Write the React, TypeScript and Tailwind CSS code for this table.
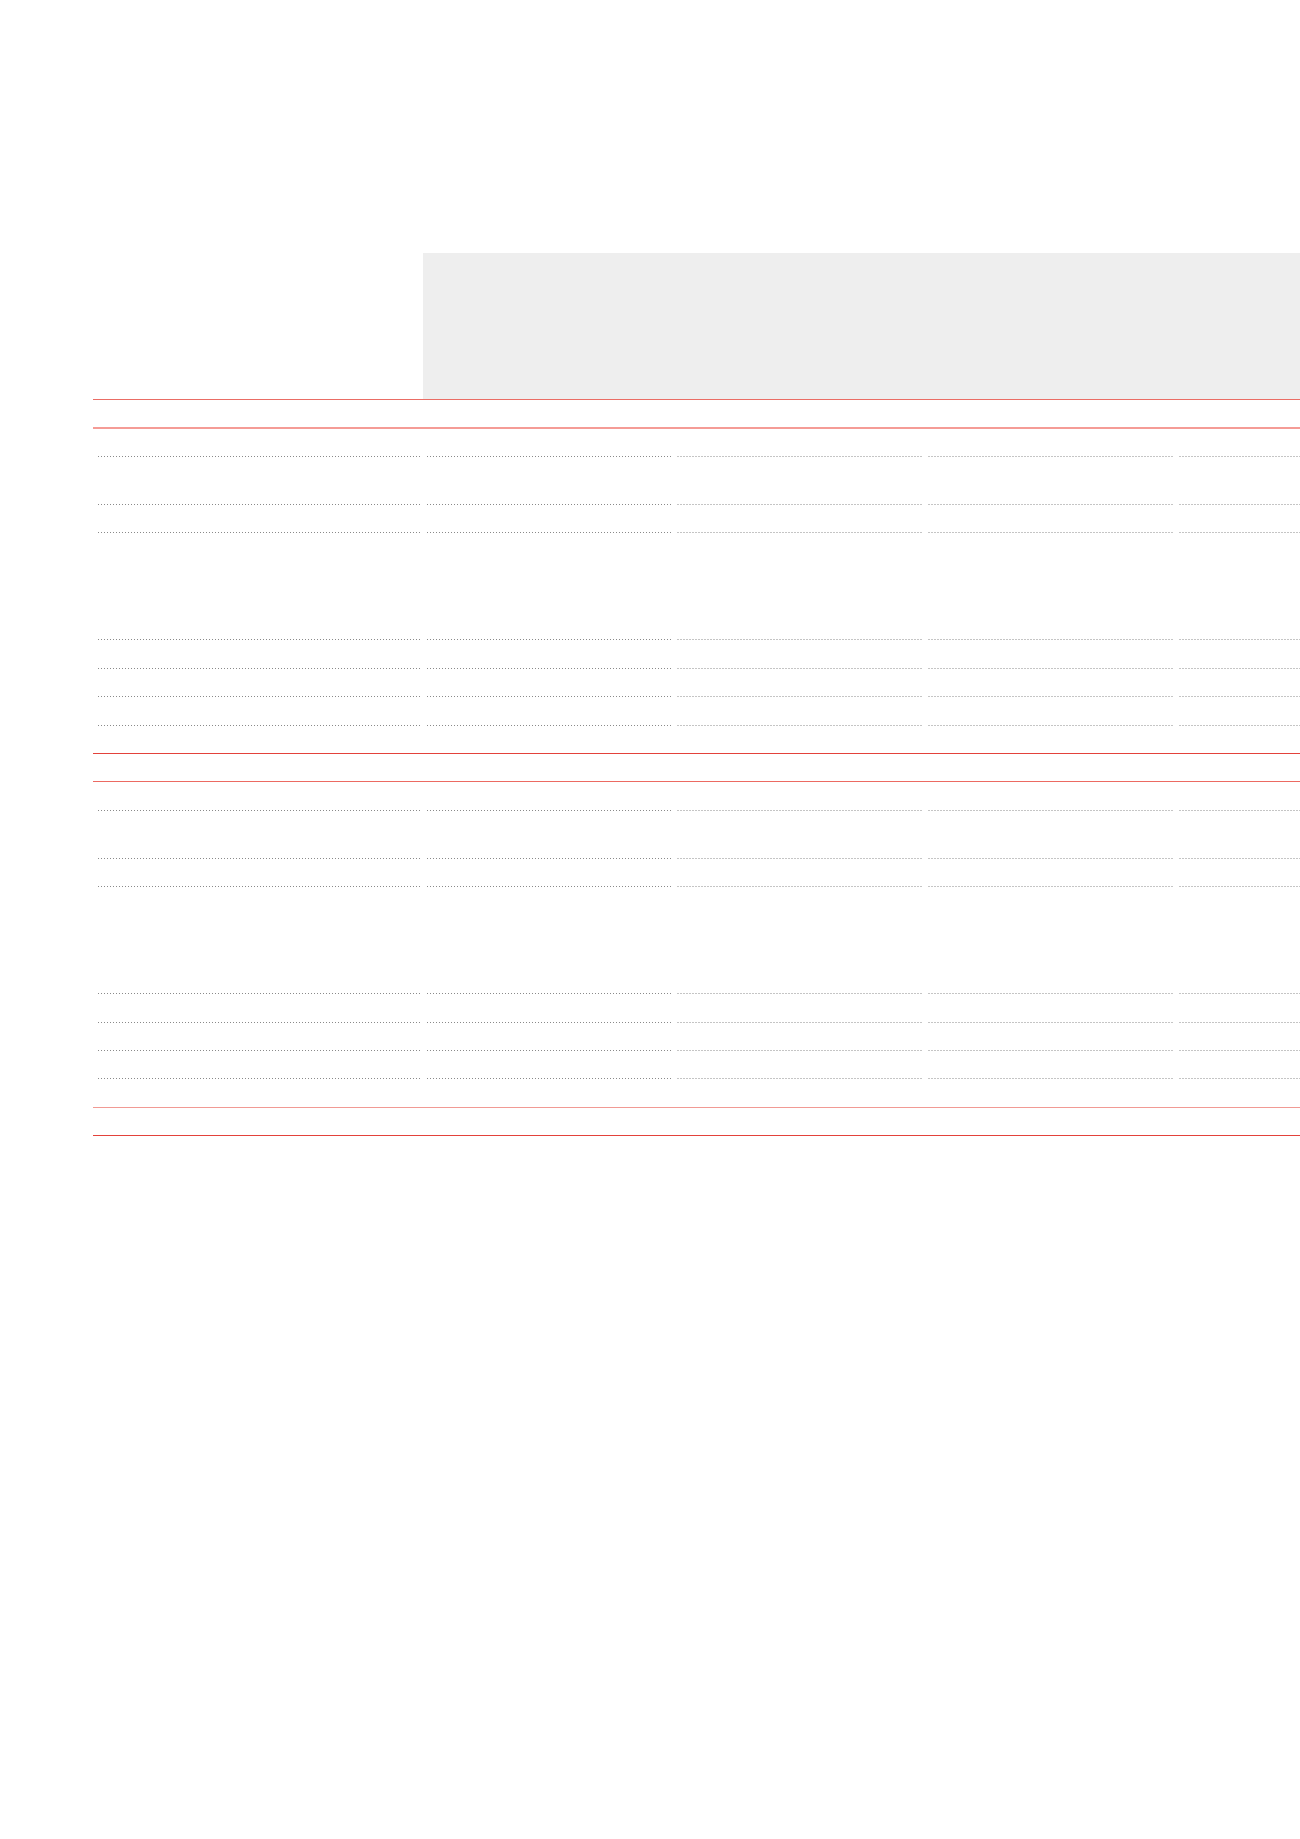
import React from "react";

type RowKind = "dot" | "redA" | "redB" | "redC" | "redD";

const heights: { h: string; kind: RowKind }[] = [
  { h: "h-[29px]", kind: "redB" },
  { h: "h-[28px]", kind: "dot" },
  { h: "h-[48px]", kind: "dot" },
  { h: "h-[28px]", kind: "dot" },
  { h: "h-[107px]", kind: "dot" },
  { h: "h-[29px]", kind: "dot" },
  { h: "h-[28px]", kind: "dot" },
  { h: "h-[29px]", kind: "dot" },
  { h: "h-[28px]", kind: "redC" },
  { h: "h-[28px]", kind: "redA" },
  { h: "h-[29px]", kind: "dot" },
  { h: "h-[48px]", kind: "dot" },
  { h: "h-[28px]", kind: "dot" },
  { h: "h-[107px]", kind: "dot" },
  { h: "h-[29px]", kind: "dot" },
  { h: "h-[28px]", kind: "dot" },
  { h: "h-[28px]", kind: "dot" },
  { h: "h-[29px]", kind: "redD" },
  { h: "h-[28px]", kind: "redC" },
];

const cols = ["w-[330px]", "w-[250px]", "w-[251px]", "w-[251px]", "w-[251px]"];

function redClass(kind: RowKind) {
  switch (kind) {
    case "redA":
      return "border-b border-[#ec6a62]";
    case "redB":
      return "border-b-2 border-[#f59c96]";
    case "redC":
      return "border-b border-[#e3423b]";
    case "redD":
      return "border-b border-[#f19a94]";
    default:
      return "";
  }
}

function Row({ h, kind }: { h: string; kind: RowKind }) {
  if (kind !== "dot") {
    return (
      <div className={`flex ${h} ${redClass(kind)}`}>
        {cols.map((c, i) => (
          <div key={i} className={`${c} shrink-0`} />
        ))}
      </div>
    );
  }
  return (
    <div className={`flex ${h}`}>
      {cols.map((c, i) => (
        <div key={i} className={`${c} shrink-0 pl-[3px] pr-[2px]`}>
          <div className="h-full bg-[linear-gradient(to_right,#8a8a8a_1px,transparent_1px)] bg-[length:3px_1px] bg-bottom bg-repeat-x" />
        </div>
      ))}
    </div>
  );
}

export default function App() {
  return (
    <div className="w-[1300px] min-h-[1839px] overflow-hidden bg-white font-['Liberation_Sans',Arial,sans-serif]">
      <div className="pt-[253px] pl-[93px]">
        <div className="w-[1333px]">
          <div className="flex h-[147px] border-b border-[#ea6d65]">
            <div className="w-[330px] shrink-0 bg-white" />
            <div className="flex-1 bg-[#eeeeee]" />
          </div>
          {heights.map((r, i) => (
            <Row key={i} h={r.h} kind={r.kind} />
          ))}
        </div>
      </div>
    </div>
  );
}
